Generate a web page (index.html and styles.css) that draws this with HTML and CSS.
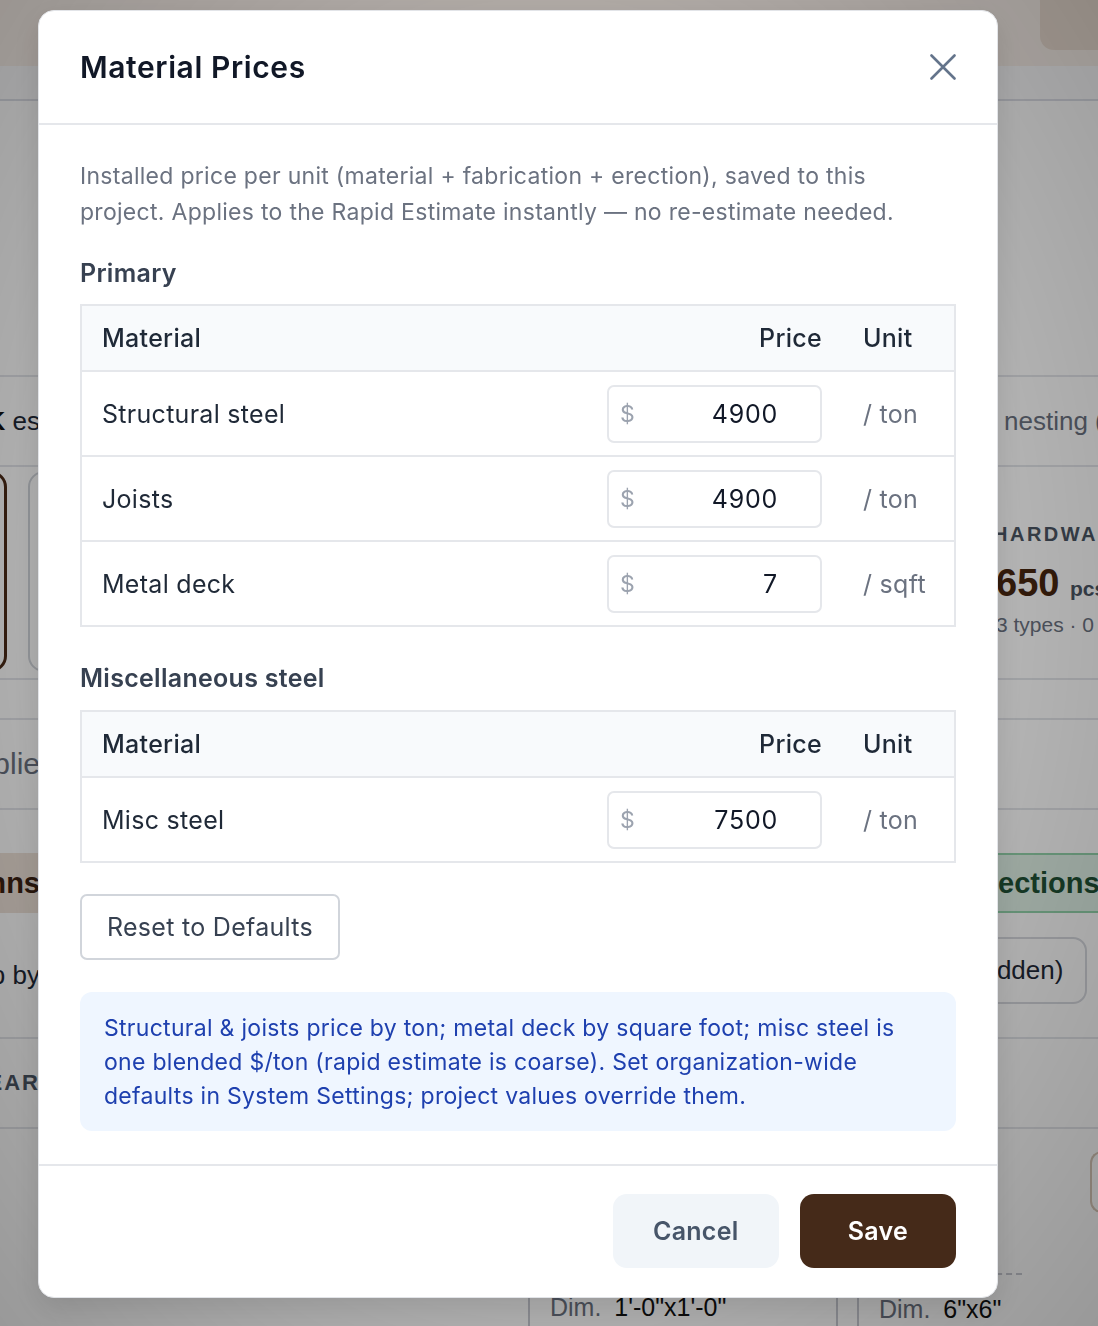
FILE: index.html
```html
<!DOCTYPE html>
<html lang="en">
<head>
  <meta charset="UTF-8">
  <meta name="viewport" content="width=device-width, initial-scale=1.0">
  <title>Material Prices</title>
  <link rel="stylesheet" href="styles.css">
</head>
<body>
<div class="app">
  <div class="topbar">
    <div class="topbar-action"></div>
  </div>
  <div class="tabbar"></div>

  <div class="bg-row bg-chart"></div>

  <div class="bg-row bg-tall">
    <div class="bg-left"><b>QUICK</b>&nbsp;es</div>
    <div></div>
    <div class="bg-right muted pad">nesting (beta)</div>
  </div>

  <div class="bg-row bg-cards">
    <div class="bg-left cards-left">
      <div class="mini-card active"></div>
      <div class="mini-card"></div>
    </div>
    <div></div>
    <div class="bg-right stat">
      <div class="stat-label">HARDWARE</div>
      <div class="stat-value">650 <span>pcs</span></div>
      <div class="stat-sub">3 types · 0 missing</div>
    </div>
  </div>

  <div class="bg-row bg-gap"></div>

  <div class="bg-row bg-tall">
    <div class="bg-left muted big">Supplie</div>
    <div></div>
    <div class="bg-right"></div>
  </div>

  <div class="bg-row bg-gap plain"></div>

  <div class="bg-row bg-band">
    <div class="bg-left tan">Columns</div>
    <div></div>
    <div class="bg-right green"><span>Connections</span></div>
  </div>

  <div class="bg-row bg-filter">
    <div class="bg-left dark">Group by</div>
    <div></div>
    <div class="bg-right"><span class="pill">(hidden)</span></div>
  </div>

  <div class="bg-row bg-tall">
    <div class="bg-left caps">YEAR</div>
    <div></div>
    <div class="bg-right"></div>
  </div>

  <div class="bg-bottom">
    <div class="dim-card">
      <div class="dim"><span>Dim.</span> 1'-0"x1'-0"</div>
    </div>
    <div class="dim-card short">
      <div class="dim"><span>Dim.</span> 6"x6"</div>
    </div>
    <div class="ghost-btn"></div>
  </div>
</div>

<div class="overlay">
  <div class="modal">
    <div class="modal-header">
      <h2>Material Prices</h2>
      <button class="close-btn" title="Close">
        <svg width="26" height="26" viewBox="0 0 26 26" fill="none" stroke="currentColor" stroke-width="2.6" stroke-linecap="round">
          <path d="M1.5 1.5L24.5 24.5M24.5 1.5L1.5 24.5"/>
        </svg>
      </button>
    </div>

    <div class="modal-body">
      <p class="intro">Installed price per unit (material + fabrication + erection), saved to this project. Applies to the Rapid Estimate instantly — no re-estimate needed.</p>

      <h3 class="section-title">Primary</h3>
      <div class="price-table">
        <div class="price-row head">
          <div>Material</div>
          <div class="right">Price</div>
          <div class="unit">Unit</div>
        </div>
        <div class="price-row">
          <div>Structural steel</div>
          <label class="price-input"><span>$</span><input type="text" value="4900"></label>
          <div class="unit muted">/ ton</div>
        </div>
        <div class="price-row">
          <div>Joists</div>
          <label class="price-input"><span>$</span><input type="text" value="4900"></label>
          <div class="unit muted">/ ton</div>
        </div>
        <div class="price-row">
          <div>Metal deck</div>
          <label class="price-input"><span>$</span><input type="text" value="7"></label>
          <div class="unit muted">/ sqft</div>
        </div>
      </div>

      <h3 class="section-title">Miscellaneous steel</h3>
      <div class="price-table">
        <div class="price-row head">
          <div>Material</div>
          <div class="right">Price</div>
          <div class="unit">Unit</div>
        </div>
        <div class="price-row">
          <div>Misc steel</div>
          <label class="price-input"><span>$</span><input type="text" value="7500"></label>
          <div class="unit muted">/ ton</div>
        </div>
      </div>

      <button class="btn-reset">Reset to Defaults</button>

      <div class="note">Structural &amp; joists price by ton; metal deck by square foot; misc steel is one blended $/ton (rapid estimate is coarse). Set organization-wide defaults in System Settings; project values override them.</div>
    </div>

    <div class="modal-footer">
      <button class="btn btn-cancel">Cancel</button>
      <button class="btn btn-save">Save</button>
    </div>
  </div>
</div>
</body>
</html>
```

FILE: styles.css
```css
* {
  box-sizing: border-box;
}

body {
  margin: 0;
  font-family: Inter, "Noto Sans", sans-serif;
  background-color: #ffffff;
  overflow: hidden;
}

/* page behind the dialog */

.app {
  height: 1326px;
  overflow: hidden;
  font-family: "Liberation Sans", Arial, sans-serif;
  color: #1f2937;
}

.topbar {
  height: 66px;
  display: flex;
  background-color: #f8efe9;
}

.topbar-action {
  margin-left: auto;
  width: 58px;
  height: 50px;
  border-radius: 0 0 0 14px;
  background-color: #e9dcd1;
}

.tabbar {
  height: 35px;
  background-color: #fbfbfc;
  border-bottom: 2px solid #dcdee6;
}

.bg-row {
  display: grid;
  grid-template-columns: 40px 1fr 110px;
  align-items: center;
  border-bottom: 2px solid #e3e5ea;
}

.bg-chart {
  height: 276px;
}

.bg-tall {
  height: 90px;
}

.bg-gap {
  height: 40px;
}

.bg-gap.plain {
  border-bottom: none;
  height: 43px;
}

.bg-left {
  display: flex;
  justify-content: flex-end;
  overflow: hidden;
  white-space: nowrap;
  font-size: 26px;
}

.bg-left b {
  color: #111;
}

.bg-right {
  overflow: hidden;
  white-space: nowrap;
  font-size: 26px;
}

.bg-right.pad {
  padding-left: 16px;
}

.muted {
  color: #6b7280;
}

.big {
  font-size: 30px;
}

.bg-cards {
  height: 213px;
  align-items: stretch;
}

.cards-left {
  justify-content: flex-start;
  gap: 21px;
  padding: 4px 0 6px;
}

.mini-card {
  flex: 0 0 120px;
  border: 2px solid #d1d5db;
  border-radius: 16px;
}

.mini-card.active {
  margin-left: -113px;
  border: 3px solid #4a2a17;
}

.stat {
  padding: 56px 0 0 8px;
}

.stat-label {
  margin-left: -3px;
  font-size: 20px;
  font-weight: bold;
  letter-spacing: 2.5px;
  color: #4b5563;
}

.stat-value {
  margin-top: 16px;
  font-size: 38px;
  font-weight: bold;
  color: #47260f;
}

.stat-value span {
  font-size: 21px;
  color: #4b5563;
}

.stat-sub {
  margin-top: 8px;
  font-size: 21px;
  color: #6b7280;
}

.bg-band {
  height: 60px;
  border-bottom: none;
  align-items: stretch;
}

.tan {
  align-items: center;
  background-color: #efe3d9;
  color: #3b2112;
  font-weight: bold;
  font-size: 29px;
}

.green {
  display: flex;
  align-items: center;
  background-color: #e0f2e7;
  border-top: 2px solid #93d3ab;
  border-bottom: 2px solid #93d3ab;
  color: #1f5135;
  font-weight: bold;
  font-size: 29px;
}

.green span {
  margin-left: -64px;
}

.bg-filter {
  height: 126px;
}

.dark {
  color: #1f2937;
}

.pill {
  display: inline-block;
  margin-left: -52px;
  padding: 16px 22px 16px 30px;
  border: 2px solid #d7d9df;
  border-radius: 14px;
  margin-bottom: 10px;
}

.caps {
  font-weight: bold;
  font-size: 22px;
  letter-spacing: 2px;
  color: #4b5563;
}

.bg-bottom {
  display: flex;
  align-items: flex-end;
  height: 210px;
  padding-left: 528px;
  gap: 19px;
}

.dim-card {
  flex-shrink: 0;
  width: 310px;
  height: 66px;
  padding: 20px 20px 0;
  border-left: 2px solid #c8cad2;
  border-right: 2px solid #c8cad2;
  font-size: 25px;
  color: #111;
}

.dim-card.short {
  width: 165px;
  border-right: none;
  border-top: 2px dashed #c8cad2;
}

.dim span {
  color: #6b7280;
  margin-right: 6px;
}

.ghost-btn {
  flex-shrink: 0;
  align-self: flex-start;
  margin-top: 22px;
  margin-left: 49px;
  width: 20px;
  height: 62px;
  border: 2px solid #d8c8b8;
  border-right: none;
  border-radius: 12px 0 0 12px;
}

/* dialog */

.overlay {
  position: fixed;
  inset: 0;
  padding: 10px 0 0 38px;
  background: radial-gradient(ellipse at 50% 45%, rgba(0, 0, 0, 0.22) 30%, rgba(0, 0, 0, 0.4) 100%);
}

.modal {
  width: 960px;
  background-color: #ffffff;
  border: 1px solid #e2e4e8;
  border-radius: 16px;
  box-shadow: 0 10px 30px rgba(0, 0, 0, 0.12);
  color: #1f2937;
  letter-spacing: 0.018em;
}

.modal-header {
  height: 114px;
  padding: 0 41px;
  display: flex;
  align-items: center;
  justify-content: space-between;
  border-bottom: 2px solid #e5e7eb;
}

.modal-header h2 {
  margin: 0;
  font-size: 30px;
  font-weight: 600;
  letter-spacing: 0.02em;
  color: #111827;
}

.close-btn {
  padding: 0;
  border: none;
  background: none;
  color: #64748b;
  display: flex;
  cursor: pointer;
}

.modal-body {
  padding: 33px 41px;
}

.intro {
  margin: 0 0 27px;
  font-size: 23px;
  line-height: 36px;
  color: #6b7280;
}

.section-title {
  margin: 0 0 15px;
  font-size: 25px;
  line-height: 32px;
  font-weight: 600;
  color: #374151;
}

.price-table {
  border: 2px solid #e5e7eb;
  margin-bottom: 35px;
}

.price-table + .section-title {
  margin-bottom: 16px;
}

.price-row {
  display: grid;
  grid-template-columns: 1fr 215px 132px;
  align-items: center;
  height: 85px;
  padding-left: 20px;
  border-top: 2px solid #e5e7eb;
  font-size: 25px;
  color: #1f2937;
}

.price-row.head {
  height: 64px;
  border-top: none;
  background-color: #f8fafc;
  font-weight: 500;
}

.right {
  text-align: right;
}

.unit {
  padding-left: 41px;
}

.price-input {
  display: flex;
  align-items: center;
  height: 58px;
  padding-left: 11px;
  border: 2px solid #e5e7eb;
  border-radius: 7px;
}

.price-input span {
  font-size: 23px;
  color: #9ca3af;
}

.price-input input {
  flex: 1;
  min-width: 0;
  border: none;
  outline: none;
  padding: 0 42px 0 0;
  text-align: right;
  font-family: inherit;
  font-size: 25px;
  letter-spacing: 0.03em;
  color: #111827;
  background: none;
}

.btn-reset {
  margin-top: -4px;
  height: 66px;
  padding: 0 25px;
  border: 2px solid #d1d5db;
  border-radius: 7px;
  background-color: #ffffff;
  font-family: inherit;
  font-size: 25px;
  letter-spacing: inherit;
  color: #374151;
  cursor: pointer;
}

.note {
  margin-top: 32px;
  padding: 19px 24px 18px;
  border-radius: 12px;
  background-color: #eff6ff;
  font-size: 23px;
  line-height: 34px;
  color: #1e40af;
}

.modal-footer {
  display: flex;
  justify-content: flex-end;
  gap: 21px;
  padding: 28px 41px 29px;
  border-top: 2px solid #e5e7eb;
}

.btn {
  height: 74px;
  border: none;
  border-radius: 14px;
  font-family: inherit;
  font-size: 25px;
  font-weight: 600;
  letter-spacing: inherit;
  cursor: pointer;
}

.btn-cancel {
  padding: 0 40px;
  background-color: #f1f5f9;
  color: #475569;
}

.btn-save {
  padding: 0 48px;
  background-color: #452a19;
  color: #ffffff;
}
```
